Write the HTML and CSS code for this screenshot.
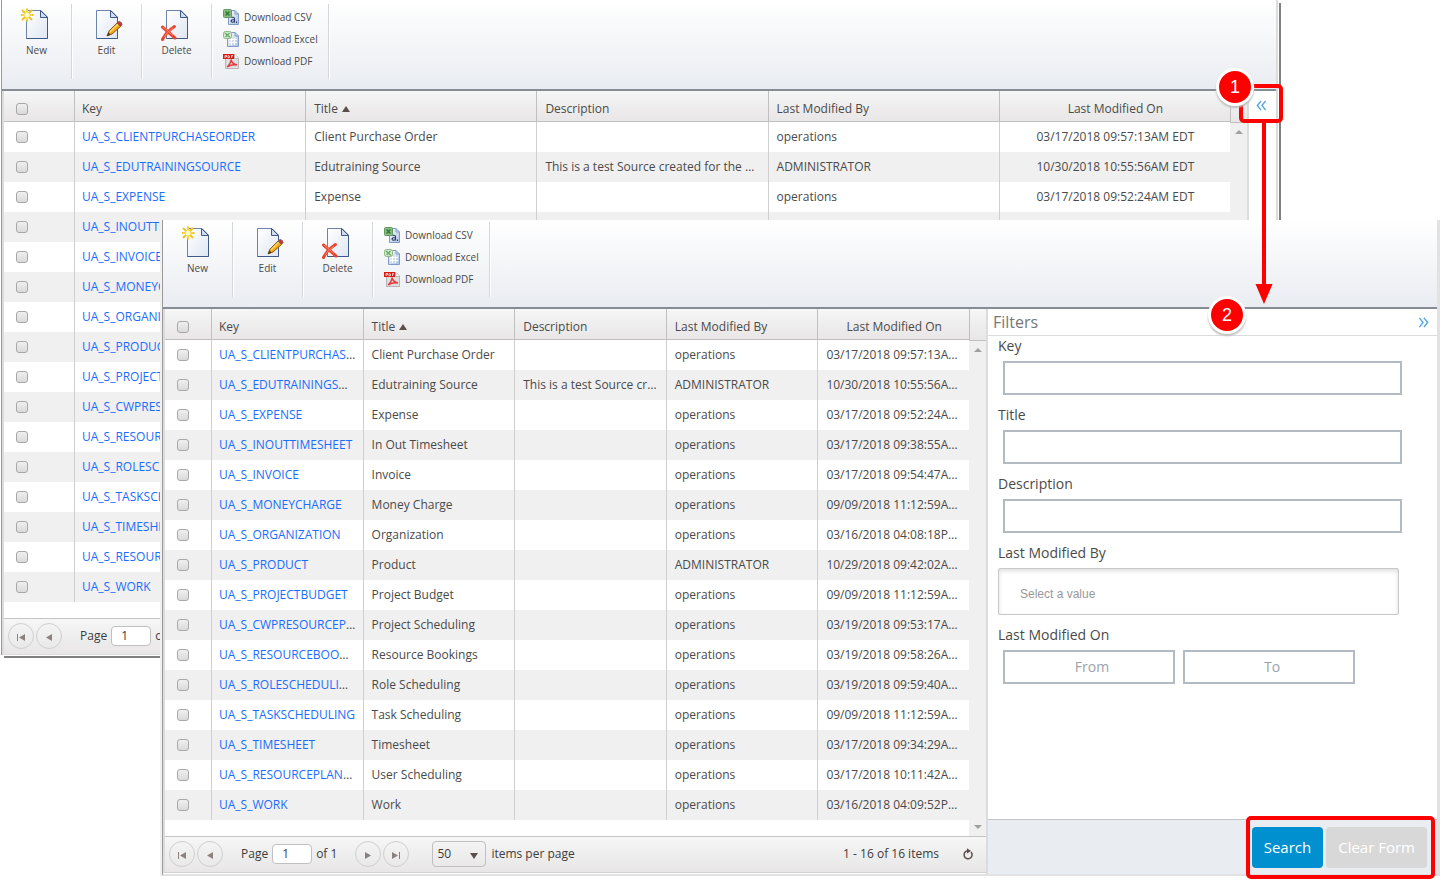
FILE: index.html
```html
<!DOCTYPE html>
<html lang="en">
<head>
<meta charset="UTF-8">
<meta name="viewport" content="width=device-width, initial-scale=1.0">
<title>Sources</title>
<link rel="stylesheet" href="styles.css">
</head>
<body>

<!-- shared icons -->
<svg class="sprite" aria-hidden="true">
    <defs>
        <linearGradient id="paper" x1="0" y1="0" x2="1" y2="1">
            <stop offset="0" stop-color="#ffffff"/>
            <stop offset="1" stop-color="#dfe6f2"/>
        </linearGradient>
        <linearGradient id="paper-blue" x1="0" y1="0" x2="1" y2="1">
            <stop offset="0" stop-color="#ffffff"/>
            <stop offset="1" stop-color="#a9bfe2"/>
        </linearGradient>
        <symbol id="doc" viewBox="0 0 32 34">
            <path d="M5.500 2.500H20L26.500 9V30.500H5.500Z" fill="url(#paper)" stroke="#6c83ab"/>
            <path d="M26.500 9V30.500H5.500" fill="none" stroke="#3f5a88"/>
            <path d="M19.500 2.500V9.500H26.500Z" fill="#cfdcef" stroke="#3f5a88"/>
        </symbol>
        <symbol id="icon-new" viewBox="0 0 32 34">
            <use href="#doc"/>
            <path d="M6 0.500V13.500M-0.500 7H12.500M1 2L11 12M11 2L1 12" stroke="#f0c61a" stroke-width="2" fill="none"/>
            <path d="M6 2V12M1 7H11" stroke="#fbe66a" stroke-width="1" fill="none"/>
            <circle cx="6" cy="7" r="2.500" fill="#fffbd0"/>
        </symbol>
        <symbol id="icon-edit" viewBox="0 0 32 34">
            <use href="#doc"/>
            <path d="M16 28L18 23L26 15L29.500 18.500L21 26Z" fill="#f2a71b" stroke="#8a5a12"/>
            <path d="M19 24L27 16" stroke="#ffd766" stroke-width="1.500"/>
            <path d="M26 15L28 13.500Q31 14 31 16.500L29.500 18.500Z" fill="#c8372d" stroke="#8a5a5a"/>
            <path d="M16 28L17.500 24.500L19.500 26.500Z" fill="#4a3413"/>
        </symbol>
        <symbol id="icon-delete" viewBox="0 0 32 34">
            <use href="#doc"/>
            <path d="M1.500 19L14 30M13.500 18.500Q5 24 1.500 31.500" stroke="#e8452f" stroke-width="3" fill="none" stroke-linecap="round"/>
            <path d="M2 19L12 27.500M12 20Q6 24 3 29" stroke="#ff8468" stroke-width="1" fill="none"/>
        </symbol>
        <symbol id="icon-csv" viewBox="0 0 16 16">
            <path d="M5.500 1.500H12L15.500 5V15.500H5.500Z" fill="url(#paper-blue)" stroke="#7f9cc9"/>
            <path d="M12 1.500V5H15.500" fill="none" stroke="#7f9cc9"/>
            <rect x="0.500" y="0.500" width="8" height="8" rx="1" fill="#8cba83" stroke="#5f9a60"/>
            <path d="M2.500 2.500L6.500 6.500M6.500 2.500L2.500 6.500" stroke="#2f7a38" stroke-width="1.500"/>
            <path d="M8.500 8.500Q11.500 7.500 11.500 10V13.500M11.500 10.500Q8 10.500 8 12.200Q8.500 14 11.500 12.500M13.500 12.500V14" fill="none" stroke="#2b3a66" stroke-width="1.100"/>
        </symbol>
        <symbol id="icon-excel" viewBox="0 0 16 16">
            <path d="M4.500 1.500H12L15.500 5V15.500H4.500Z" fill="url(#paper-blue)" stroke="#7f9cc9"/>
            <path d="M12 1.500V5H15.500" fill="none" stroke="#7f9cc9"/>
            <path d="M6 8.500H14M6 11.500H14M8.500 7V14M11.500 7V14" stroke="#ffffff"/>
            <rect x="0.500" y="0.500" width="8" height="7" rx="2" fill="#d5ebcf" stroke="#8ab887"/>
            <path d="M2 2L7 6.500M6.500 2L2.500 6" stroke="#6bae68" stroke-width="1.500"/>
        </symbol>
        <symbol id="icon-pdf" viewBox="0 0 16 16">
            <path d="M2.500 1.500H12L15.500 5V15.500H2.500Z" fill="#dedede" stroke="#b5b5b5"/>
            <path d="M11.500 1V5.500H15.500" fill="#f5f5f5" stroke="#b5b5b5"/>
            <rect x="0" y="1" width="11" height="5" fill="#d81a12"/>
            <path d="M2 5V2.500H3.500V4H2M5 2.500V5L6.500 4.500V3L5 2.500M8.500 5V2.500H10M8.500 3.700H9.500" stroke="#ffffff" stroke-width="0.700" fill="none"/>
            <path d="M4 14Q8 10.500 8 6.500Q9 11 14 12Q9 11 4 14" fill="none" stroke="#e5383a" stroke-width="1.300"/>
        </symbol>
        <symbol id="icon-prev" viewBox="0 0 10 10">
            <path d="M8 2V9L2 5.500Z" fill="#8b827f"/>
        </symbol>
        <symbol id="icon-next" viewBox="0 0 10 10">
            <path d="M2 2V9L8 5.500Z" fill="#8b827f"/>
        </symbol>
        <symbol id="icon-first" viewBox="0 0 10 10">
            <path d="M9 2V9L3 5.500Z" fill="#8b827f"/>
            <path d="M1.500 2V9" stroke="#8b827f"/>
        </symbol>
        <symbol id="icon-last" viewBox="0 0 10 10">
            <path d="M1 2V9L7 5.500Z" fill="#8b827f"/>
            <path d="M8.500 2V9" stroke="#8b827f"/>
        </symbol>
        <symbol id="icon-refresh" viewBox="0 0 12 12">
            <path d="M9 4A4 4 0 1 1 5.500 2.800" fill="none" stroke="#5a4f4c" stroke-width="1.500"/>
            <path d="M5 0.200L9 2.900L5 5.400Z" fill="#5a4f4c"/>
        </symbol>
        <symbol id="icon-expand" viewBox="0 0 12 12">
            <path d="M5.500 1L1.500 6L5.500 11M10.500 1L6.500 6L10.500 11" fill="none" stroke="#56a9e4" stroke-width="1.600"/>
        </symbol>
        <symbol id="icon-collapse" viewBox="0 0 12 12">
            <path d="M1.500 1L5.500 6L1.500 11M6.500 1L10.500 6L6.500 11" fill="none" stroke="#56a9e4" stroke-width="1.600"/>
        </symbol>
    </defs>
</svg>

<!-- filters collapsed -->
<section class="window window-back">
    <div class="toolbar">
        <button type="button" class="tool"><svg><use href="#icon-new"/></svg>New</button>
        <button type="button" class="tool"><svg><use href="#icon-edit"/></svg>Edit</button>
        <button type="button" class="tool"><svg><use href="#icon-delete"/></svg>Delete</button>
        <div class="downloads">
            <a href="#"><svg><use href="#icon-csv"/></svg>Download CSV</a>
            <a href="#"><svg><use href="#icon-excel"/></svg>Download Excel</a>
            <a href="#"><svg><use href="#icon-pdf"/></svg>Download PDF</a>
        </div>
    </div>
    <div class="content">
        <div class="grid">
            <div class="grid-body">
                <table class="wide">
                    <thead>
                        <tr><th class="check"><input type="checkbox" aria-label="Select all"></th><th class="key">Key</th><th>Title <span class="sort"></span></th><th>Description</th><th>Last Modified By</th><th class="date">Last Modified On</th></tr>
                    </thead>
                    <tbody>
                        <tr><td class="check"><input type="checkbox" aria-label="Select row"></td><td class="key"><a href="#">UA_S_CLIENTPURCHASEORDER</a></td><td>Client Purchase Order</td><td></td><td>operations</td><td class="date">03/17/2018 09:57:13AM EDT</td></tr>
                        <tr><td class="check"><input type="checkbox" aria-label="Select row"></td><td class="key"><a href="#">UA_S_EDUTRAININGSOURCE</a></td><td>Edutraining Source</td><td>This is a test Source created for the Workforce training</td><td>ADMINISTRATOR</td><td class="date">10/30/2018 10:55:56AM EDT</td></tr>
                        <tr><td class="check"><input type="checkbox" aria-label="Select row"></td><td class="key"><a href="#">UA_S_EXPENSE</a></td><td>Expense</td><td></td><td>operations</td><td class="date">03/17/2018 09:52:24AM EDT</td></tr>
                        <tr><td class="check"><input type="checkbox" aria-label="Select row"></td><td class="key"><a href="#">UA_S_INOUTTIMESHEET</a></td><td></td><td></td><td></td><td></td></tr>
                        <tr><td class="check"><input type="checkbox" aria-label="Select row"></td><td class="key"><a href="#">UA_S_INVOICE</a></td><td></td><td></td><td></td><td></td></tr>
                        <tr><td class="check"><input type="checkbox" aria-label="Select row"></td><td class="key"><a href="#">UA_S_MONEYCHARGE</a></td><td></td><td></td><td></td><td></td></tr>
                        <tr><td class="check"><input type="checkbox" aria-label="Select row"></td><td class="key"><a href="#">UA_S_ORGANIZATION</a></td><td></td><td></td><td></td><td></td></tr>
                        <tr><td class="check"><input type="checkbox" aria-label="Select row"></td><td class="key"><a href="#">UA_S_PRODUCT</a></td><td></td><td></td><td></td><td></td></tr>
                        <tr><td class="check"><input type="checkbox" aria-label="Select row"></td><td class="key"><a href="#">UA_S_PROJECTBUDGET</a></td><td></td><td></td><td></td><td></td></tr>
                        <tr><td class="check"><input type="checkbox" aria-label="Select row"></td><td class="key"><a href="#">UA_S_CWPRESOURCEPROJECT</a></td><td></td><td></td><td></td><td></td></tr>
                        <tr><td class="check"><input type="checkbox" aria-label="Select row"></td><td class="key"><a href="#">UA_S_RESOURCEBOOKINGS</a></td><td></td><td></td><td></td><td></td></tr>
                        <tr><td class="check"><input type="checkbox" aria-label="Select row"></td><td class="key"><a href="#">UA_S_ROLESCHEDULING</a></td><td></td><td></td><td></td><td></td></tr>
                        <tr><td class="check"><input type="checkbox" aria-label="Select row"></td><td class="key"><a href="#">UA_S_TASKSCHEDULING</a></td><td></td><td></td><td></td><td></td></tr>
                        <tr><td class="check"><input type="checkbox" aria-label="Select row"></td><td class="key"><a href="#">UA_S_TIMESHEET</a></td><td></td><td></td><td></td><td></td></tr>
                        <tr><td class="check"><input type="checkbox" aria-label="Select row"></td><td class="key"><a href="#">UA_S_RESOURCEPLANNING</a></td><td></td><td></td><td></td><td></td></tr>
                        <tr><td class="check"><input type="checkbox" aria-label="Select row"></td><td class="key"><a href="#">UA_S_WORK</a></td><td></td><td></td><td></td><td></td></tr>
                    </tbody>
                </table>
                <div class="scrollbar"><span class="scroll-up"></span><span class="scroll-down"></span></div>
            </div>
            <div class="pager">
                <button type="button" class="round" aria-label="First page"><svg><use href="#icon-first"/></svg></button>
                <button type="button" class="round" aria-label="Previous page"><svg><use href="#icon-prev"/></svg></button>
                <label class="page-box">Page <input type="text" value="1"> of 1</label>
            </div>
        </div>
        <aside class="rail">
            <button type="button" class="toggle" aria-label="Show filters"><svg><use href="#icon-expand"/></svg></button>
        </aside>
    </div>
</section>

<!-- filters expanded -->
<section class="window window-front">
    <div class="toolbar">
        <button type="button" class="tool"><svg><use href="#icon-new"/></svg>New</button>
        <button type="button" class="tool"><svg><use href="#icon-edit"/></svg>Edit</button>
        <button type="button" class="tool"><svg><use href="#icon-delete"/></svg>Delete</button>
        <div class="downloads">
            <a href="#"><svg><use href="#icon-csv"/></svg>Download CSV</a>
            <a href="#"><svg><use href="#icon-excel"/></svg>Download Excel</a>
            <a href="#"><svg><use href="#icon-pdf"/></svg>Download PDF</a>
        </div>
    </div>
    <div class="content">
        <div class="grid">
            <div class="grid-body">
                <table>
                    <thead>
                        <tr><th class="check"><input type="checkbox" aria-label="Select all"></th><th class="key">Key</th><th>Title <span class="sort"></span></th><th>Description</th><th>Last Modified By</th><th class="date">Last Modified On</th></tr>
                    </thead>
                    <tbody>
                        <tr><td class="check"><input type="checkbox" aria-label="Select row"></td><td class="key"><a href="#">UA_S_CLIENTPURCHASEORDER</a></td><td>Client Purchase Order</td><td></td><td>operations</td><td class="date">03/17/2018 09:57:13AM EDT</td></tr>
                        <tr><td class="check"><input type="checkbox" aria-label="Select row"></td><td class="key"><a href="#">UA_S_EDUTRAININGSOURCE</a></td><td>Edutraining Source</td><td>This is a test Source created for the Workforce training</td><td>ADMINISTRATOR</td><td class="date">10/30/2018 10:55:56AM EDT</td></tr>
                        <tr><td class="check"><input type="checkbox" aria-label="Select row"></td><td class="key"><a href="#">UA_S_EXPENSE</a></td><td>Expense</td><td></td><td>operations</td><td class="date">03/17/2018 09:52:24AM EDT</td></tr>
                        <tr><td class="check"><input type="checkbox" aria-label="Select row"></td><td class="key"><a href="#">UA_S_INOUTTIMESHEET</a></td><td>In Out Timesheet</td><td></td><td>operations</td><td class="date">03/17/2018 09:38:55AM EDT</td></tr>
                        <tr><td class="check"><input type="checkbox" aria-label="Select row"></td><td class="key"><a href="#">UA_S_INVOICE</a></td><td>Invoice</td><td></td><td>operations</td><td class="date">03/17/2018 09:54:47AM EDT</td></tr>
                        <tr><td class="check"><input type="checkbox" aria-label="Select row"></td><td class="key"><a href="#">UA_S_MONEYCHARGE</a></td><td>Money Charge</td><td></td><td>operations</td><td class="date">09/09/2018 11:12:59AM EDT</td></tr>
                        <tr><td class="check"><input type="checkbox" aria-label="Select row"></td><td class="key"><a href="#">UA_S_ORGANIZATION</a></td><td>Organization</td><td></td><td>operations</td><td class="date">03/16/2018 04:08:18PM EDT</td></tr>
                        <tr><td class="check"><input type="checkbox" aria-label="Select row"></td><td class="key"><a href="#">UA_S_PRODUCT</a></td><td>Product</td><td></td><td>ADMINISTRATOR</td><td class="date">10/29/2018 09:42:02AM EDT</td></tr>
                        <tr><td class="check"><input type="checkbox" aria-label="Select row"></td><td class="key"><a href="#">UA_S_PROJECTBUDGET</a></td><td>Project Budget</td><td></td><td>operations</td><td class="date">09/09/2018 11:12:59AM EDT</td></tr>
                        <tr><td class="check"><input type="checkbox" aria-label="Select row"></td><td class="key"><a href="#">UA_S_CWPRESOURCEPROJECT</a></td><td>Project Scheduling</td><td></td><td>operations</td><td class="date">03/19/2018 09:53:17AM EDT</td></tr>
                        <tr><td class="check"><input type="checkbox" aria-label="Select row"></td><td class="key"><a href="#">UA_S_RESOURCEBOOKINGS</a></td><td>Resource Bookings</td><td></td><td>operations</td><td class="date">03/19/2018 09:58:26AM EDT</td></tr>
                        <tr><td class="check"><input type="checkbox" aria-label="Select row"></td><td class="key"><a href="#">UA_S_ROLESCHEDULING</a></td><td>Role Scheduling</td><td></td><td>operations</td><td class="date">03/19/2018 09:59:40AM EDT</td></tr>
                        <tr><td class="check"><input type="checkbox" aria-label="Select row"></td><td class="key"><a href="#">UA_S_TASKSCHEDULING</a></td><td>Task Scheduling</td><td></td><td>operations</td><td class="date">09/09/2018 11:12:59AM EDT</td></tr>
                        <tr><td class="check"><input type="checkbox" aria-label="Select row"></td><td class="key"><a href="#">UA_S_TIMESHEET</a></td><td>Timesheet</td><td></td><td>operations</td><td class="date">03/17/2018 09:34:29AM EDT</td></tr>
                        <tr><td class="check"><input type="checkbox" aria-label="Select row"></td><td class="key"><a href="#">UA_S_RESOURCEPLANNING</a></td><td>User Scheduling</td><td></td><td>operations</td><td class="date">03/17/2018 10:11:42AM EDT</td></tr>
                        <tr><td class="check"><input type="checkbox" aria-label="Select row"></td><td class="key"><a href="#">UA_S_WORK</a></td><td>Work</td><td></td><td>operations</td><td class="date">03/16/2018 04:09:52PM EDT</td></tr>
                    </tbody>
                </table>
                <div class="scrollbar"><span class="scroll-up"></span><span class="scroll-down"></span></div>
            </div>
            <div class="pager">
                <button type="button" class="round" aria-label="First page"><svg><use href="#icon-first"/></svg></button>
                <button type="button" class="round" aria-label="Previous page"><svg><use href="#icon-prev"/></svg></button>
                <label class="page-box">Page <input type="text" value="1"> of 1</label>
                <button type="button" class="round" aria-label="Next page"><svg><use href="#icon-next"/></svg></button>
                <button type="button" class="round" aria-label="Last page"><svg><use href="#icon-last"/></svg></button>
                <label class="page-size"><span class="select-box"><select><option>50</option></select></span>items per page</label>
                <span class="total">1 - 16 of 16 items</span>
                <button type="button" class="refresh" aria-label="Refresh"><svg><use href="#icon-refresh"/></svg></button>
            </div>
        </div>
        <form class="filters">
            <div class="filters-head">
                <h2>Filters</h2>
                <button type="button" class="toggle" aria-label="Hide filters"><svg><use href="#icon-collapse"/></svg></button>
            </div>
            <div class="filters-body">
                <div class="field">
                    <label for="key">Key</label>
                    <input type="text" id="key">
                </div>
                <div class="field">
                    <label for="title">Title</label>
                    <input type="text" id="title">
                </div>
                <div class="field">
                    <label for="description">Description</label>
                    <input type="text" id="description">
                </div>
                <div class="field">
                    <label for="modified-by">Last Modified By</label>
                    <input type="text" id="modified-by" class="picker" placeholder="Select a value">
                </div>
                <div class="field">
                    <label for="from">Last Modified On</label>
                    <div class="range">
                        <input type="text" id="from" placeholder="From">
                        <input type="text" id="to" placeholder="To" aria-label="To">
                    </div>
                </div>
            </div>
            <div class="filters-foot">
                <button type="button" class="btn btn-search">Search</button>
                <button type="button" class="btn btn-clear">Clear Form</button>
            </div>
        </form>
    </div>
</section>

<!-- callouts -->
<div class="highlight highlight-toggle"></div>
<div class="highlight highlight-buttons"></div>
<svg class="arrow" viewBox="0 0 18 182" aria-hidden="true">
    <path d="M7 0H11V162H17.500L9 182L0.500 162H7Z" fill="#ff0000"/>
</svg>
<span class="step step-one">1</span>
<span class="step step-two">2</span>

</body>
</html>
```
FILE: styles.css
```css
* {
    box-sizing: border-box;
}

body {
    margin: 0;
    position: relative;
    min-height: 100vh;
    overflow: hidden;
    background-color: #fff;
    color: #4a4a4a;
    font-family: "Open Sans", "Noto Sans", sans-serif;
    font-size: 12px;
}

button,
input,
select {
    margin: 0;
    font-family: inherit;
    color: inherit;
}

button {
    padding: 0;
    border: none;
    background: none;
    cursor: pointer;
}

a {
    color: #1a6dff;
    text-decoration: none;
}

.sprite {
    position: absolute;
    width: 0;
    height: 0;
}

/* windows */
.window {
    position: absolute;
    background-color: #fff;
    border-left: 1px solid #9a9a9a;
}

.window-back {
    top: 0;
    left: 1px;
    right: 174px;
    border-right: 2px solid #dcdcdc;
    box-shadow: 1px 1px 0 #fff, 3px 3px 0 #808080;
}

.window-front {
    top: 220px;
    left: 162px;
    right: 12px;
    border-right: 3px solid #e2e2e2;
    border-bottom: 2px solid #e2e2e2;
    box-shadow: -2px 0 0 #f0f0f0;
}

/* toolbar */
.toolbar {
    display: flex;
    align-items: flex-start;
    padding: 2px 0 10px;
    background: linear-gradient(#fff, #e9ecf1);
    border-bottom: 2px solid #868c96;
    font-size: 10px;
}

.window-back .toolbar {
    padding-top: 4px;
}

.tool {
    width: 70px;
    height: 75px;
    display: flex;
    flex-direction: column;
    align-items: center;
    padding-top: 4px;
    border-right: 1px solid #d5d7da;
    box-shadow: 1px 0 0 #fff;
    font-size: 10px;
    line-height: 16px;
}

.tool svg {
    width: 32px;
    height: 34px;
    overflow: visible;
}

.downloads {
    height: 75px;
    padding: 2px 10px 0 11px;
    border-right: 1px solid #d5d7da;
    box-shadow: 1px 0 0 #fff;
}

.downloads a {
    display: flex;
    align-items: center;
    gap: 5px;
    height: 22px;
    color: #4a4a4a;
}

.downloads svg {
    width: 16px;
    height: 16px;
}

/* grid */
.content {
    display: flex;
}

.grid {
    flex: 1;
    min-width: 0;
    border-left: 2px solid #dcdcdc;
}

.window-front .grid {
    border-bottom: 1px solid #d0d0d0;
    margin-bottom: 1px;
}

.grid-body {
    display: flex;
    border-bottom: 1px solid #c5c5c5;
}

table {
    flex: 1;
    width: 100%;
    min-width: 0;
    margin-bottom: 16px;
    table-layout: fixed;
    border-collapse: separate;
    border-spacing: 0;
}

th,
td {
    height: 30px;
    padding: 0 7px 0 8px;
    border-left: 1px solid #cfcfcf;
    overflow: hidden;
    white-space: nowrap;
    text-overflow: ellipsis;
    text-align: left;
    font-weight: normal;
    line-height: 18px;
}

th {
    height: 31px;
    padding-top: 6px;
    background: linear-gradient(#f6f6f6, #e8e6e6);
    border-color: #c0c0c0;
    border-bottom: 1px solid #c0c0c0;
}

tbody tr:nth-child(even) {
    background-color: #f0f0f0;
}

.check {
    width: 46px;
    padding-left: 12px;
    border-left: none;
}

.key {
    padding-left: 7px;
}

.wide .check {
    width: 70px;
}

.date {
    text-align: center;
}

input[type="checkbox"] {
    appearance: none;
    display: block;
    width: 12px;
    height: 12px;
    border: 1px solid #a8a8a8;
    border-radius: 3px;
    background: linear-gradient(#efefef, #dadada);
}

.sort {
    display: inline-block;
    margin-left: 1px;
    border: 4px solid transparent;
    border-top: none;
    border-bottom: 6px solid #5a4f4c;
    vertical-align: 1px;
}

.scrollbar {
    width: 17px;
    display: flex;
    flex-direction: column;
    align-items: center;
    justify-content: space-between;
    background-color: #f0f0f0;
    padding-bottom: 7px;
}

.scrollbar::before {
    content: "";
    width: 100%;
    height: 31px;
    background: linear-gradient(#f6f6f6, #e8e6e6);
    border-left: 1px solid #c0c0c0;
    border-bottom: 1px solid #c0c0c0;
}

.scroll-up,
.scroll-down {
    border: 4px solid transparent;
}

.scroll-up {
    margin: 7px 0 auto;
    border-top: none;
    border-bottom-color: #a0a0a0;
}

.scroll-down {
    border-bottom: none;
    border-top-color: #a0a0a0;
}

/* pager */
.pager {
    display: flex;
    align-items: center;
    gap: 2px;
    height: 35px;
    padding: 0 12px 2px 4px;
    background: linear-gradient(#f6f6f6, #e8e6e6);
    color: #3c3c3c;
}

.window-back .pager {
    border-bottom: 1px solid #dcdcdc;
    height: 36px;
}

.round {
    display: flex;
    align-items: center;
    justify-content: center;
    width: 26px;
    height: 26px;
    border: 1px solid #cfcfcf;
    border-radius: 50%;
}

.round svg {
    width: 10px;
    height: 10px;
    margin-top: 2px;
}

.page-box {
    display: flex;
    align-items: center;
    gap: 4px;
    margin: 0 16px;
}

.page-box input {
    width: 40px;
    height: 20px;
    padding: 0 9px;
    border: 1px solid #c0c0c0;
    border-radius: 4px;
    background-color: #fff;
    font-size: 12px;
}

.page-size {
    display: flex;
    align-items: center;
    gap: 5px;
    margin-left: 21px;
}

.select-box {
    position: relative;
}

.select-box::after {
    content: "";
    position: absolute;
    right: 8px;
    top: 12px;
    border: 4px solid transparent;
    border-top: 6px solid #5a4f4c;
    border-bottom: none;
    pointer-events: none;
}

.select-box select {
    appearance: none;
    width: 54px;
    height: 26px;
    padding: 0 4px;
    border: 1px solid #c0c0c0;
    border-radius: 4px;
    background: transparent;
    font-size: 12px;
}

.total {
    margin-left: auto;
}

.refresh {
    margin-left: 21px;
}

.refresh svg {
    display: block;
    width: 12px;
    height: 12px;
}

.toggle svg {
    display: block;
    width: 11px;
    height: 11px;
}

/* filters */
.rail {
    width: 29px;
    padding: 7px 0 0 7px;
    border-left: 2px solid #dcdcdc;
}

.filters {
    flex: 0 0 451px;
    display: flex;
    flex-direction: column;
    border-left: 2px solid #dcdcdc;
}

.filters-head {
    display: flex;
    align-items: center;
    justify-content: space-between;
    height: 27px;
    padding: 0 8px 0 5px;
    border-bottom: 1px solid #dcdcdc;
}

.filters-head h2 {
    margin: 0;
    font-size: 16px;
    font-weight: normal;
    color: #777;
}

.filters-body {
    flex: 1;
    display: flex;
    flex-direction: column;
    gap: 10px;
    padding: 0 35px 10px 10px;
    font-size: 14px;
}

.field {
    display: flex;
    flex-direction: column;
    gap: 6px;
}

.field label {
    line-height: 19px;
}

.field input {
    height: 34px;
    margin-left: 5px;
    padding: 0 8px;
    border: 2px solid #b4bac2;
    background-color: #fff;
    font-size: 14px;
}

.field input::placeholder {
    color: #9aa3ad;
}

.field .picker {
    height: 47px;
    margin: 0 3px 0 0;
    padding: 4px 21px 0;
    border: 1px solid #c8c8c8;
    border-radius: 2px;
    box-shadow: inset 0 2px 4px #ddd;
    font-family: "Liberation Sans", Arial, sans-serif;
    font-size: 12px;
}

.field .picker::placeholder {
    color: #999;
}

.range {
    display: flex;
    gap: 3px;
}

.range input {
    width: 172px;
    padding: 0 4px 2px 10px;
    text-align: center;
}

.filters-foot {
    display: flex;
    justify-content: flex-end;
    align-items: center;
    gap: 3px;
    height: 55px;
    padding-right: 10px;
    background-color: #e9ecf1;
    border-top: 1px solid #c5c5c5;
}

.btn {
    height: 41px;
    padding: 0 12px;
    border-radius: 4px;
    color: #fff;
    font-size: 15px;
}

.btn-search {
    background-color: #0090cf;
}

.btn-clear {
    background-color: #d8d8d8;
}

/* callouts */
.highlight {
    position: absolute;
    border: 4px solid #f00;
    border-radius: 5px;
    pointer-events: none;
}

.highlight-toggle {
    top: 84px;
    right: 169px;
    width: 44px;
    height: 39px;
}

.highlight-buttons {
    top: 816px;
    right: 17px;
    width: 189px;
    height: 63px;
}

.arrow {
    position: absolute;
    top: 122px;
    right: 179px;
    width: 18px;
    height: 182px;
}

.step {
    position: absolute;
    display: flex;
    align-items: center;
    justify-content: center;
    width: 38px;
    height: 38px;
    border: 3px solid #fff;
    border-radius: 50%;
    background-color: #f00;
    box-shadow: 0 2px 2px #bbb;
    color: #fff;
    font-family: "Liberation Sans", Arial, sans-serif;
    font-size: 18px;
}

.step-one {
    top: 68px;
    right: 198px;
}

.step-two {
    top: 296px;
    right: 206px;
}
```
